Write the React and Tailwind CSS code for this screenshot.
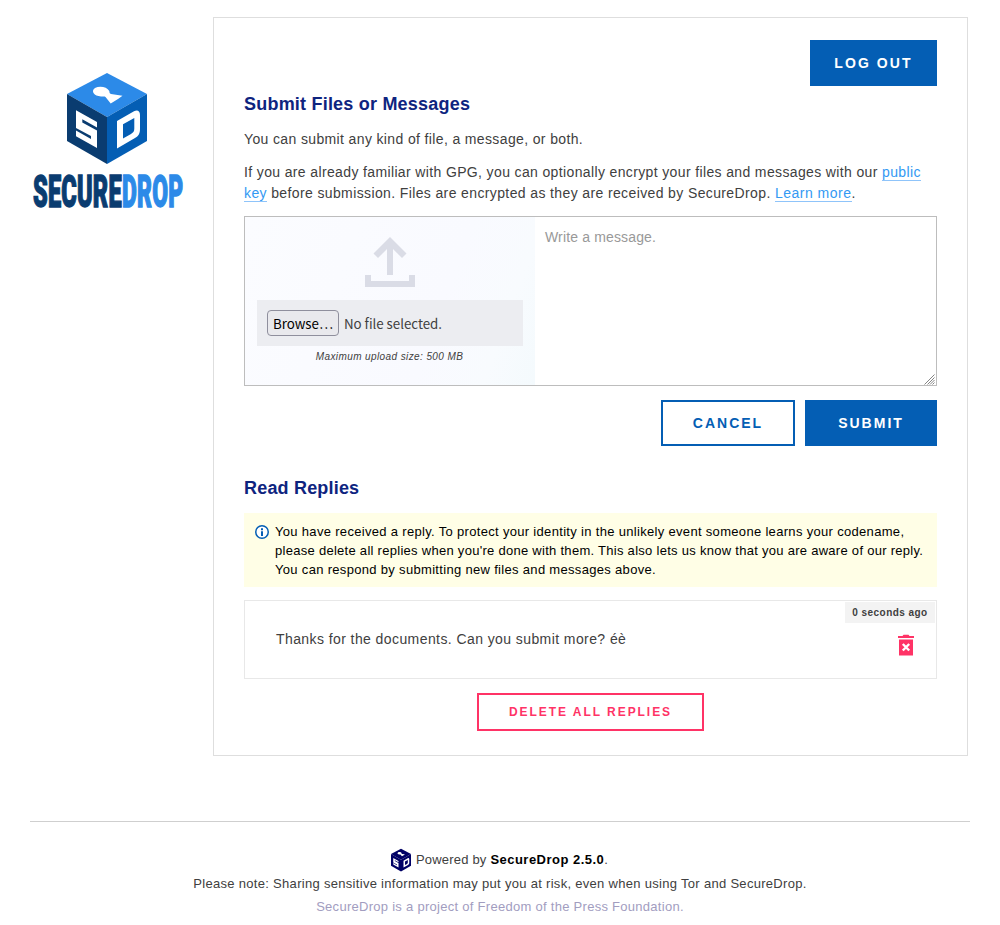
function CubeLogo({ className, left, right, top, keyhole }) {
  return (
    <svg viewBox="0 0 80 91" className={className} aria-hidden="true">
      <path d="M40 0 80 21 40 44 0 21Z" fill={top} />
      <path d="M0 21 40 44V91L0 68Z" fill={left} />
      <path d="M80 21 40 44V91L80 68Z" fill={right} />
      <path
        d="M28 15C33 12.500 40 14 42.300 18C42.500 19.500 42.500 20.500 44 21L55.500 22.800 51 26 43.700 30.500 38.500 24C37.500 23 36 23.600 34 23.500C27 23 23.500 18 28 15Z"
        fill={keyhole}
      />
      <path d="M9 37.300 30 49V54.500L15.300 46.200V49.500L30 57.500V75L9 63.300V57.500L24 66V63L9 55Z" fill="#fff" />
      <path
        fillRule="evenodd"
        d="M50 48 67 38.300C70.500 36.500 73 38 73 42V56C73 60.500 71.500 63 68 65L50 75.500ZM56 51.300V65.500L64 61C66.500 59.500 67.300 58 67.300 55.500V45Z"
        fill="#fff"
      />
    </svg>
  );
}

function Wordmark() {
  return (
    <svg viewBox="0 -12 154 60" className="-mt-[2px] h-[60px] w-[154px] overflow-visible">
      <g fontFamily="Roboto, sans-serif" fontWeight="900" fontSize="43.500" strokeWidth="1.400">
        <text transform="scale(.475 1)" x="0" y="33.200" textLength="187" lengthAdjust="spacingAndGlyphs" fill="#0a3c70" stroke="#0a3c70">SECURE</text>
        <text transform="scale(.475 1)" x="187.500" y="33.200" textLength="129" lengthAdjust="spacingAndGlyphs" fill="#2c8ae8" stroke="#2c8ae8">DROP</text>
      </g>
    </svg>
  );
}

function UploadIcon() {
  return (
    <svg viewBox="0 0 50 50" className="h-[50px] w-[50px]" fill="#dadce6">
      <path d="M25 0 41.500 16.500 37 21 28 12V38H22V12L13 21 8.500 16.500Z" />
      <path d="M0 38H6V44H44V38H50V50H0Z" />
    </svg>
  );
}

function Link({ children }) {
  return <a className="border-b border-[#8fc4fa] text-[#3399f3]">{children}</a>;
}

export default function App() {
  return (
    <div className="h-[925px] w-[1000px] overflow-hidden bg-white px-[30px] pt-[17px] font-['Liberation_Sans',sans-serif] text-[14px] leading-[21px] tracking-[0.365px] text-[#404040]">
      <div className="flex">
        <aside className="flex w-[183px] shrink-0 flex-col pt-[56px] pl-[3px]">
          <CubeLogo className="ml-[34px] h-[91px] w-[80px]" left="#0a3c70" right="#045eb4" top="#2c8ae8" keyhole="#fff" />
          <Wordmark />
        </aside>

        <main className="flex h-[739px] w-[755px] flex-col border border-[#dedede] px-[30px] pt-[22px]">
          <button className="h-[46px] w-[127px] self-end bg-[#045eb4] text-[14px] font-bold tracking-[2.1px] text-white">LOG OUT</button>
          <h2 className="mt-[6px] text-[18px] leading-[24px] font-bold tracking-[0.21px] text-[#0e247f]">Submit Files or Messages</h2>
          <p className="mt-[13px]">You can submit any kind of file, a message, or both.</p>
          <p className="mt-[12px] whitespace-nowrap">
            If you are already familiar with GPG, you can optionally encrypt your files and messages with our <Link>public</Link>
            <br />
            <span className="tracking-[0.377px]">
              <Link>key</Link> before submission. Files are encrypted as they are received by SecureDrop. <span className="tracking-[0.5px]"><Link>Learn more</Link></span>.
            </span>
          </p>

          <div className="mt-[12px] flex h-[170px] shrink-0 border border-[#bdbdbd]">
            <div className="flex w-[290px] flex-col items-center bg-linear-[110deg,#fbfcff_0%,#f9faff_65%,#f8fbfe_85%,#f4fafd_100%] px-[12px] pt-[20px]">
              <UploadIcon />
              <div className="mt-[13px] flex h-[46px] w-full items-center bg-[#ecedf1] pl-[10px] font-['Noto_Sans_CJK_SC',sans-serif] text-[13.333px] tracking-normal">
                <button className="h-[26px] w-[72px] rounded-[4px] border border-[#8f8f9d] bg-[#e9e9ed] pt-[1px] leading-[24px] text-black">Browse…</button>
                <span className="ml-[5px] tracking-[-0.03px]">No file selected.</span>
              </div>
              <p className="mt-[3px] mr-[1px] text-[10px] leading-[15px] tracking-[0.4px] italic">Maximum upload size: 500 MB</p>
            </div>
            <div className="flex flex-1 items-start justify-between pt-[10px] pl-[10px] text-[#999]">
              <span className="tracking-[0.15px]">Write a message.</span>
              <svg viewBox="0 0 11 11" className="mr-[1px] mb-[0px] h-[11px] w-[11px] self-end" stroke="#777" strokeWidth="0.900">
                <path d="M0.500 10.500 10.500 0.500M3.500 10.500 10.500 3.500M6 10.500 10.500 6M8.500 10.500 10.500 8.500" />
              </svg>
            </div>
          </div>

          <div className="mt-[14px] flex justify-end gap-[10px] font-bold tracking-[2px]">
            <button className="h-[46px] w-[134px] border-2 border-[#045eb4] text-[#045eb4]">CANCEL</button>
            <button className="h-[46px] w-[132px] bg-[#045eb4] text-white">SUBMIT</button>
          </div>

          <h2 className="mt-[30px] text-[18px] leading-[24px] font-bold tracking-[0.19px] text-[#0e247f]">Read Replies</h2>
          <div className="mt-[13px] flex h-[74px] shrink-0 bg-[#fffee6] pt-[9px] pl-[11px] text-[13px] leading-[19px] tracking-[0.317px] whitespace-nowrap text-black">
            <svg viewBox="0 0 14 14" className="mt-[3px] mr-[6px] h-[14px] w-[14px] shrink-0">
              <circle cx="7" cy="7" r="6.250" fill="#fff" stroke="#045eb4" strokeWidth="1.500" />
              <path d="M6 3.200H8V5.200H6ZM6 6.200H8V11H6Z" fill="#045eb4" />
            </svg>
            <p>
              You have received a reply. To protect your identity in the unlikely event someone learns your codename,
              <br />
              <span className="tracking-[0.28px]">please delete all replies when you're done with them. This also lets us know that you are aware of our reply.</span>
              <br />
              You can respond by submitting new files and messages above.
            </p>
          </div>

          <div className="mt-[13px] flex h-[79px] shrink-0 justify-between border border-[#e8e8e8] pr-[1px]">
            <p className="mt-[28px] ml-[31px] tracking-[0.415px]">Thanks for the documents. Can you submit more? éè</p>
            <div className="flex flex-col items-end pt-[1px]">
              <time className="h-[21px] w-[90px] bg-[#f3f3f3] text-center text-[10px] leading-[21px] font-bold tracking-[0.45px]">0 seconds ago</time>
              <svg viewBox="0 0 16 22" className="mt-[11px] mr-[21px] h-[22px] w-[16px]" fill="#ff3366">
                <path d="M0 2H4.500L5.500 .8H10.500L11.500 2H16V4H0ZM1 5.500H15V21.500H1Z" />
                <path d="M4.800 10 11.200 16.500M11.200 10 4.800 16.500" stroke="#fff" strokeWidth="2.400" />
              </svg>
            </div>
          </div>
          <button className="mt-[14px] h-[38px] w-[227px] shrink-0 self-center border-2 border-[#ff3366] text-[12px] font-bold tracking-[1.95px] text-[#ff3366]">DELETE ALL REPLIES</button>
        </main>
      </div>

      <footer className="mt-[65px] border-t border-[#cfcfcf] pt-[26px] text-center text-[13px] leading-[23px] tracking-[0.3px]">
        <div className="flex h-[24px] items-start justify-center">
          <CubeLogo className="mr-[5px] h-[24px] w-[20px]" left="#000066" right="#000066" top="#000066" keyhole="#fff" />
          <span className="mr-[1px] tracking-[0.2px]">Powered by <strong className="tracking-[0.48px] text-black">SecureDrop 2.5.0</strong>.</span>
        </div>
        <p>Please note: Sharing sensitive information may put you at risk, even when using Tor and SecureDrop.</p>
        <p className="tracking-[0.28px] text-[#a29dbf]">SecureDrop is a project of Freedom of the Press Foundation.</p>
      </footer>
    </div>
  );
}
